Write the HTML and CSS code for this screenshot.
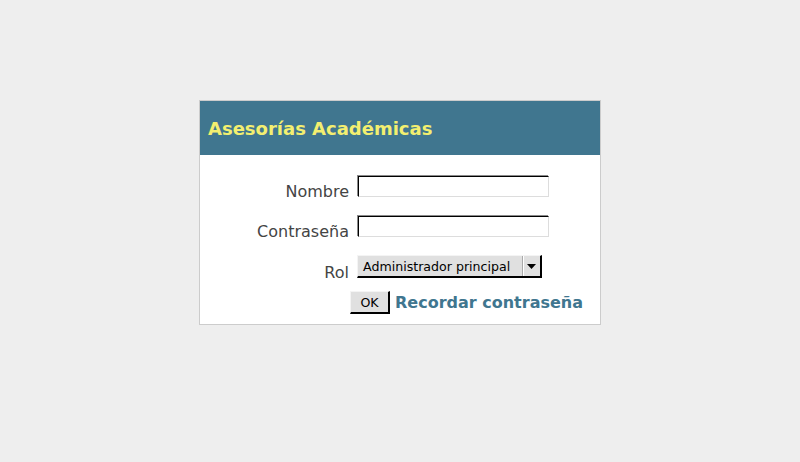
FILE: index.html
```html
<!DOCTYPE html>
<html lang="es">
<head>
<meta charset="utf-8">
<title>Asesorías Académicas</title>
<link rel="stylesheet" href="styles.css">
</head>
<body>
<div class="panel">
  <div class="header"><h1 class="title">Asesorías Académicas</h1></div>
  <form class="form">
    <label class="label" for="nombre">Nombre</label>
    <div class="ctl"><input class="input" id="nombre" type="text"></div>
    <label class="label" for="pass">Contraseña</label>
    <div class="ctl"><input class="input" id="pass" type="password"></div>
    <label class="label">Rol</label>
    <div class="ctl">
      <div class="select"><span class="select-text">Administrador principal</span><span class="select-btn"><svg width="9" height="5" viewBox="0 0 9 5"><path d="M0 0H9L4.5 5Z" fill="#000"/></svg></span></div>
    </div>
    <div class="actions">
      <button class="btn" type="button">OK</button>
      <a class="link" href="#">Recordar contraseña</a>
    </div>
  </form>
</div>
</body>
</html>
```
FILE: styles.css
```css
html, body { margin: 0; padding: 0; }
body {
  background: #eeeeee;
  font-family: "DejaVu Sans", sans-serif;
  padding-top: 100px;
}
.panel {
  width: 400px;
  margin: 0 auto;
  border: 1px solid #cccccc;
  background: #ffffff;
}
.header {
  background: #40768f;
  height: 54px;
  display: flex;
  align-items: center;
  padding-left: 8px;
}
.title {
  margin: 0;
  font-size: 18px;
  font-weight: bold;
  color: #f3ef70;
}
.form {
  display: grid;
  grid-template-columns: 150px 1fr;
  row-gap: 18px;
  padding: 20px 0 10px 0;
}
.label {
  text-align: right;
  padding-right: 1px;
  font-size: 16px;
  color: #444444;
  align-self: end;
  line-height: 16px;
  margin-bottom: -3px;
}
.ctl { padding-left: 7px; display: flex; }
.input {
  box-sizing: border-box;
  width: 191px;
  height: 21px;
  margin: 1px 0 0 1px;
  border-style: solid;
  border-width: 1px;
  border-color: #000 #dddddd #dddddd #000;
  box-shadow: -1px -1px 0 #8a8a8a;
  background: #fff;
  padding: 0 3px;
}
.select {
  box-sizing: border-box;
  width: 185px;
  height: 23px;
  display: flex;
  align-items: center;
  background: #e0e0e0;
  border-style: solid;
  border-width: 1px 2px 2px 1px;
  border-color: #f4f4f4 #000 #000 #f4f4f4;
  font-size: 12.6px;
  color: #000;
}
.select-text { flex: 1; padding-left: 5px; }
.select-btn {
  width: 17px;
  height: 100%;
  display: flex;
  align-items: center;
  justify-content: center;
  border-left: 1px solid #aaaaaa;
  box-shadow: 1px 0 0 #fff inset;
}
.actions {
  grid-column: 2;
  display: flex;
  align-items: center;
  gap: 5px;
  margin-top: -5px;
}
.btn {
  box-sizing: border-box;
  width: 40px;
  height: 23px;
  margin: 0;
  padding: 0;
  background: #e0e0e0;
  border-style: solid;
  border-width: 1px 2px 2px 1px;
  border-color: #f4f4f4 #000 #000 #f4f4f4;
  font-family: "DejaVu Sans", sans-serif;
  font-size: 12.6px;
  color: #000;
}
.link {
  font-size: 16px;
  font-weight: bold;
  color: #40768f;
  text-decoration: none;
}
```
